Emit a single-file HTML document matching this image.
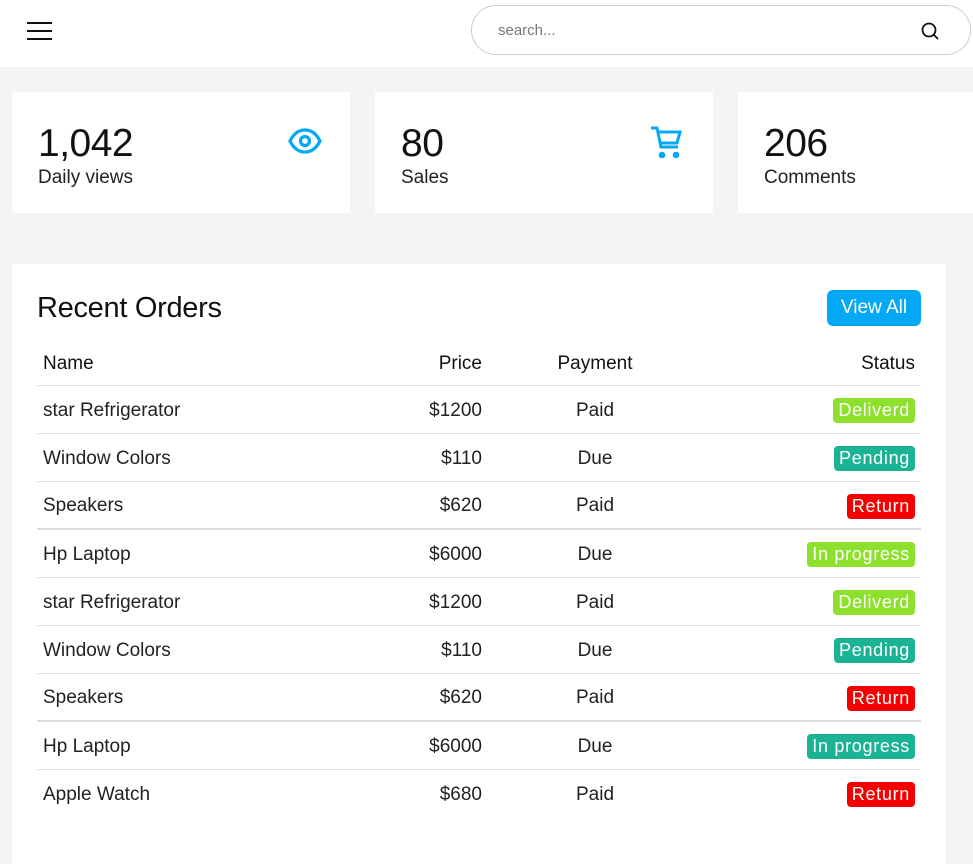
<!DOCTYPE html>
<html><head><meta charset="utf-8"><style>
*{box-sizing:border-box;margin:0;padding:0}
body{width:973px;height:858px;overflow:hidden;background:#f4f4f4;font-family:"Liberation Sans",sans-serif;color:#222;position:relative}
.hdr{position:absolute;left:0;top:0;width:973px;height:67px;background:#fff}
.ham{position:absolute;left:27px;top:22px;width:25px}
.ham div{height:2px;background:#111;margin-bottom:6px}
.search{position:absolute;left:471px;top:5px;width:500px;height:50px;border:1px solid #ccc;border-radius:25px;background:#fff}
.search span{position:absolute;left:26px;top:16px;font-size:15px;color:#777}
.search svg{position:absolute;left:448px;top:15px}
.card{position:absolute;top:92px;height:121px;background:#fff;width:338px}
.card .n{position:absolute;left:26px;top:30px;font-size:39px;color:#111;letter-spacing:-0.5px}
.card .l{position:absolute;left:26px;top:75px;font-size:19px;color:#222}
.card svg{position:absolute}
.orders{position:absolute;left:12px;top:264px;width:934px;height:600px;background:#fff}
.orders h2{position:absolute;left:25px;top:28px;font-size:29px;font-weight:normal;color:#111;letter-spacing:-0.3px}
.btn{position:absolute;left:815px;top:26px;width:94px;height:36px;background:#03a9f4;color:#fff;border-radius:6px;font-size:19px;text-align:center;line-height:36px}
table{position:absolute;left:25px;top:76px;width:884px;border-collapse:collapse;font-size:19px;table-layout:fixed}
td,th{height:48px;padding:3px 6px 0;font-weight:normal;color:#222;border-bottom:1px solid #e0e0e0}
th{height:45px;color:#111}
.r{text-align:right}.c{text-align:center}
.b{display:inline-block;color:#fff;padding:0 5px;border-radius:4px;height:25px;line-height:25px;font-size:18px;letter-spacing:.7px;vertical-align:middle}
.g{background:#8de02c}.t{background:#1ab394}.x{background:#f40000}
tr.d td{border-bottom:2px solid #ddd}
</style></head><body>
<div class="hdr">
<div class="ham"><div></div><div></div><div></div></div>
<div class="search"><span>search...</span><svg width="20" height="20" viewBox="0 0 20 20" fill="none" stroke="#111" stroke-width="1.8"><circle cx="9" cy="9" r="6.5"/><path d="M14 14l4 4"/></svg></div>
</div>
<div class="card" style="left:12px"><div class="n">1,042</div><div class="l">Daily views</div>
<svg style="left:276px;top:35px" width="34" height="28" viewBox="0 0 34 28" fill="none" stroke="#03a9f4" stroke-width="3.2"><path d="M2 14C6 6 11 3 17 3s11 3 15 11c-4 8-9 11-15 11S6 22 2 14z"/><circle cx="17" cy="14" r="4.5"/></svg></div>
<div class="card" style="left:375px"><div class="n">80</div><div class="l">Sales</div>
<svg style="left:275px;top:33px" width="32" height="34" viewBox="0 0 32 34" fill="none" stroke="#03a9f4" stroke-width="3"><path d="M1 3h6l4 19h17"/><path d="M8 7h22l-3 11H10"/><circle cx="12" cy="30" r="1.8" fill="#03a9f4"/><circle cx="26" cy="30" r="1.8" fill="#03a9f4"/></svg></div>
<div class="card" style="left:738px;width:240px"><div class="n">206</div><div class="l">Comments</div></div>
<div class="orders">
<h2>Recent Orders</h2><div class="btn">View All</div>
<table>
<colgroup><col style="width:340px"><col style="width:111px"><col style="width:214px"><col style="width:219px"></colgroup>
<tr><th style="text-align:left">Name</th><th class="r">Price</th><th class="c">Payment</th><th class="r">Status</th></tr>
<tr><td>star Refrigerator</td><td class="r">$1200</td><td class="c">Paid</td><td class="r"><span class="b g">Deliverd</span></td></tr>
<tr><td>Window Colors</td><td class="r">$110</td><td class="c">Due</td><td class="r"><span class="b t">Pending</span></td></tr>
<tr class="d"><td>Speakers</td><td class="r">$620</td><td class="c">Paid</td><td class="r"><span class="b x">Return</span></td></tr>
<tr><td>Hp Laptop</td><td class="r">$6000</td><td class="c">Due</td><td class="r"><span class="b g">In progress</span></td></tr>
<tr><td>star Refrigerator</td><td class="r">$1200</td><td class="c">Paid</td><td class="r"><span class="b g">Deliverd</span></td></tr>
<tr><td>Window Colors</td><td class="r">$110</td><td class="c">Due</td><td class="r"><span class="b t">Pending</span></td></tr>
<tr class="d"><td>Speakers</td><td class="r">$620</td><td class="c">Paid</td><td class="r"><span class="b x">Return</span></td></tr>
<tr><td>Hp Laptop</td><td class="r">$6000</td><td class="c">Due</td><td class="r"><span class="b t">In progress</span></td></tr>
<tr><td style="border:0">Apple Watch</td><td class="r" style="border:0">$680</td><td class="c" style="border:0">Paid</td><td class="r" style="border:0"><span class="b x">Return</span></td></tr>
</table>
</div>
</body></html>
